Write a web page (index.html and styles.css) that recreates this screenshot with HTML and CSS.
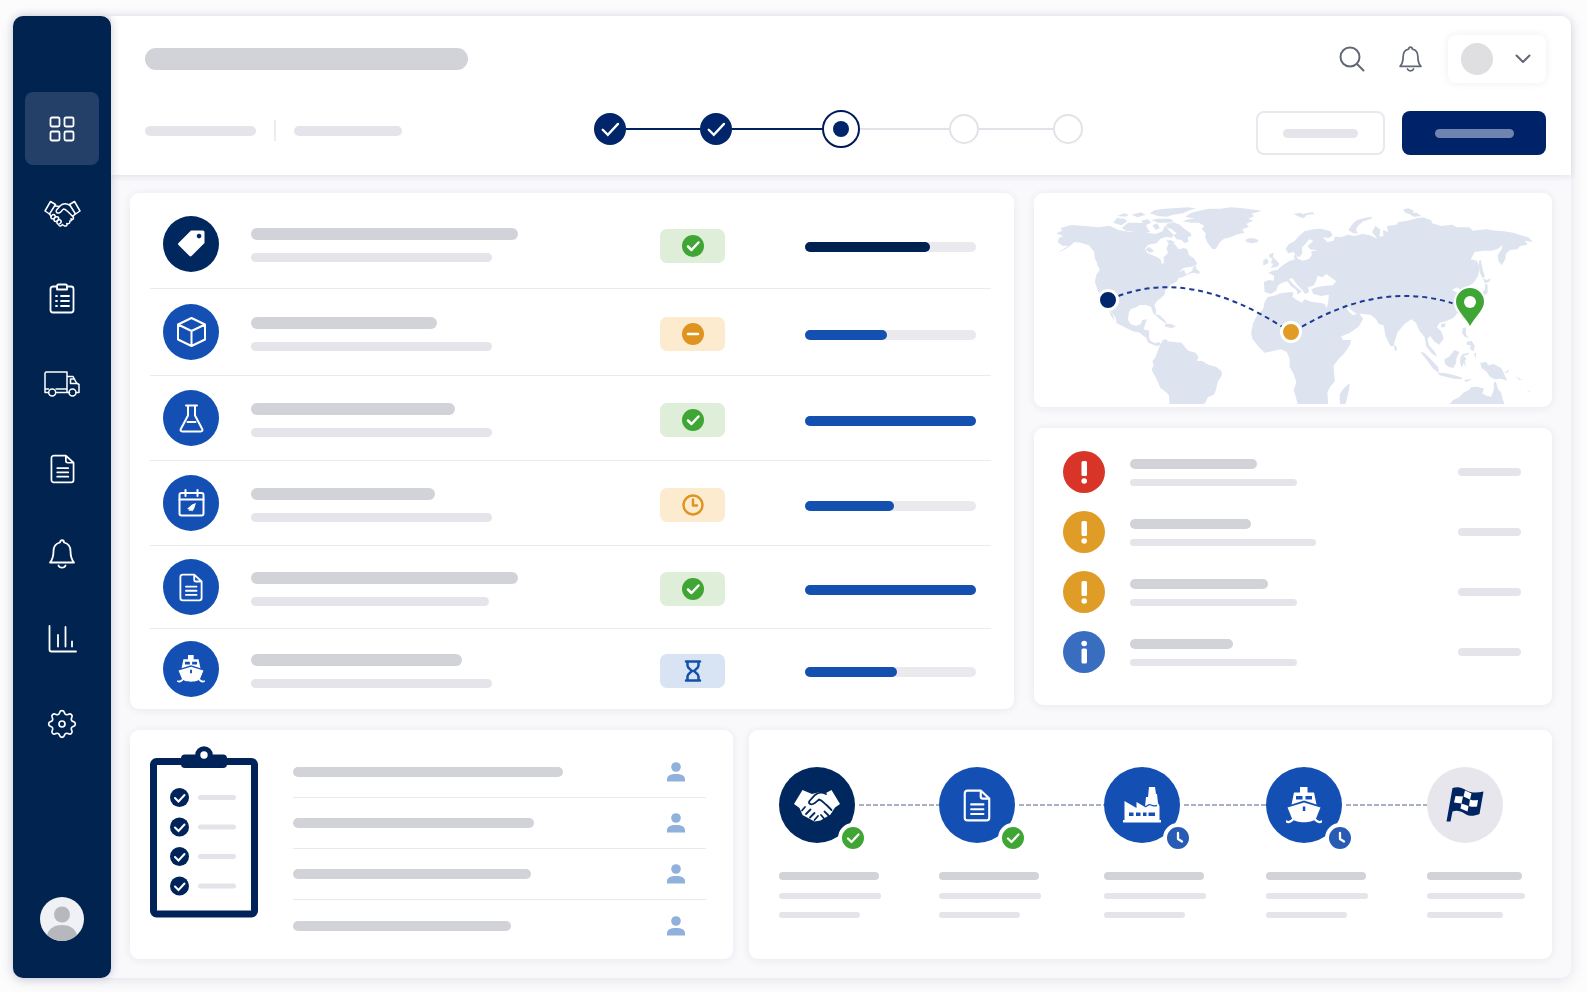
FILE: index.html
```html
<!DOCTYPE html>
<html lang="en">
<head>
    <meta charset="UTF-8">
    <meta name="viewport" content="width=device-width, initial-scale=1.0">
    <title>Sourcing Dashboard</title>
    <link rel="stylesheet" href="styles.css">
</head>
<body>

<!-- shared icons -->
<svg class="sprite" aria-hidden="true">
    <symbol id="check" viewBox="0 0 22 22"><path d="M6 11.5l3.5 3.5 7-7.500"/></symbol>
    <symbol id="clock" viewBox="0 0 22 22"><path d="M11 6v6l4 2.500"/></symbol>
    <symbol id="bell" viewBox="0 0 26 30">
        <path d="M11 3.500c0-3 4-3 4 0 4 1 6.500 4.500 6.500 8.500 0 5.500.5 8 3.500 11.500H1c3-3.500 3.500-6 3.500-11.500C4.500 8 7 4.500 11 3.500zM9.500 26.500c1 2.800 6 2.800 7 0"/>
    </symbol>
    <symbol id="doc" viewBox="0 0 26 31">
        <path d="M4 1.500h12.500L24.500 9v18a2.500 2.500 0 0 1-2.500 2.500H4A2.500 2.500 0 0 1 1.500 27V4A2.500 2.500 0 0 1 4 1.500zM16.500 1.500V7a2 2 0 0 0 2 2h6M7.500 14.500h11.500M7.500 19h11.500M7.500 23.500h11.500"/>
    </symbol>
    <symbol id="ship" viewBox="0 0 36 37">
        <path fill-rule="evenodd" d="M14 0h7.500v5.500H28l2.500 12L18 13.500l-12.500 4L8 5.500h6zM10 9v3.500h6.500V9zm9.500 0v3.500H26V9z"/>
        <path fill-rule="evenodd" d="M1.500 20.500L18 15.500l16.500 5-4.500 11c-3 5-21 5-24 0zM16.800 19.500v4.500h2.500v-4.500z"/>
        <path d="M.5 34.500c3 1.800 4.500-.5 6-1.500M35.500 34.500c-3 1.800-4.500-.5-6-1.500" fill="none" stroke="currentColor" stroke-width="2.200" stroke-linecap="round"/>
    </symbol>
    <symbol id="person" viewBox="0 0 18 20">
        <circle cx="9" cy="5" r="4.800"/><path d="M0 19.500v-2C0 13.500 3.500 12 9 12s9 1.500 9 5.500v2z"/>
    </symbol>
    <symbol id="alert" viewBox="0 0 42 42">
        <rect x="18.500" y="10" width="5.500" height="15" rx="1.500"/><circle cx="21.200" cy="30" r="2.800"/>
    </symbol>
</svg>

<div class="app">
    <nav class="sidebar" aria-label="Main">
        <a class="nav-item active" href="#" aria-label="Dashboard">
            <svg class="line-icon" width="26" height="26" viewBox="0 0 26 26">
                <rect x="1.500" y="1.500" width="9" height="9" rx="1.500"/><rect x="15.500" y="1.500" width="9" height="9" rx="1.500"/>
                <rect x="1.500" y="15.500" width="9" height="9" rx="1.500"/><rect x="15.500" y="15.500" width="9" height="9" rx="1.500"/>
            </svg>
        </a>
        <a class="nav-item" href="#" aria-label="Suppliers">
            <svg class="line-icon thin" width="37" height="28" viewBox="0 0 37 28">
                <path d="M6.500 1.500L1 11l4.500 3 6-9.500zM30.500 1.500L36 11l-4.500 3-6-9.500z"/>
                <path d="M11 6l4.500.5M26 5.500c-3-2.500-7-2.500-9.500 0l-4 4.500c-1 2 .5 3.500 2.500 3 2-.5 3-3 4.500-4 2 0 3 1.500 4.500 2.800l5 5c1.500 1.700-.5 3.700-2.300 2.200M31 14l-2.300 2.800M5.500 14l1.800 2.500"/>
                <path d="M7.300 18.200c-1.500-2 2-5 3.500-3s-2 5-3.500 3zM10.300 20.800c-1.500-2 2.500-5.500 4-3.500s-2.500 5.500-4 3.500zM13.300 23.500c-1.500-2 2-5 3.500-3s-2 5-3.500 3zM15 25.500c1 1 2.500.5 3.500-1M19 25l1.500 1c2 .5 3-1 2.300-2.500 2 .8 3.500-.5 3-2.500 1.500 0 2.200-1 1.900-2"/>
            </svg>
        </a>
        <a class="nav-item" href="#" aria-label="Orders">
            <svg class="line-icon" width="26" height="31" viewBox="0 0 26 31">
                <path d="M8 3.500H4A2.500 2.500 0 0 0 1.500 6v21A2.500 2.500 0 0 0 4 29.500h18a2.500 2.500 0 0 0 2.500-2.500V6A2.500 2.500 0 0 0 22 3.500h-4"/>
                <path d="M9.500 1.500h7A1.500 1.500 0 0 1 18 3v3.500H8V3a1.500 1.500 0 0 1 1.500-1.500zM12 13h8M12 18h8M12 23h8M7 13h1M7 18h1M7 23h1"/>
            </svg>
        </a>
        <a class="nav-item" href="#" aria-label="Shipments">
            <svg class="line-icon thin" width="36" height="26" viewBox="0 0 36 26">
                <path d="M4.500 21.500H1V2.500A1.500 1.500 0 0 1 2.500 1H23v20.500M23 5.500h6l3.500 6.500 2.500 1.500v8h-3M25.500 21.500H12M1 18h3.500M12 18h11M30.500 8h-4v4.500h6"/>
                <circle cx="8.200" cy="21.500" r="3.500"/><circle cx="28.500" cy="21.500" r="3.500"/>
            </svg>
        </a>
        <a class="nav-item" href="#" aria-label="Documents">
            <svg class="line-icon" width="25" height="30"><use href="#doc"/></svg>
        </a>
        <a class="nav-item" href="#" aria-label="Alerts">
            <svg class="line-icon" width="26" height="30"><use href="#bell"/></svg>
        </a>
        <a class="nav-item" href="#" aria-label="Reports">
            <svg class="line-icon" width="29" height="28" viewBox="0 0 29 28">
                <path d="M1.500 1v23.500a2 2 0 0 0 2 2H28M10 10v11.500M17.500 2v19.500M24 16.500v5"/>
            </svg>
        </a>
        <a class="nav-item" href="#" aria-label="Settings">
            <svg class="line-icon gear" width="30" height="30" viewBox="-1 -1 18 18">
                <path d="M9.405 1.050c-.413-1.400-2.397-1.400-2.810 0l-.1.340a1.464 1.464 0 0 1-2.105.872l-.31-.17c-1.283-.698-2.686.705-1.987 1.987l.169.311c.446.82.023 1.841-.872 2.105l-.34.1c-1.400.413-1.400 2.397 0 2.810l.34.1a1.464 1.464 0 0 1 .872 2.105l-.17.31c-.698 1.283.705 2.686 1.987 1.987l.311-.169a1.464 1.464 0 0 1 2.105.872l.1.340c.413 1.400 2.397 1.400 2.810 0l.1-.34a1.464 1.464 0 0 1 2.105-.872l.31.17c1.283.698 2.686-.705 1.987-1.987l-.169-.311a1.464 1.464 0 0 1 .872-2.105l.34-.1c1.400-.413 1.400-2.397 0-2.810l-.34-.1a1.464 1.464 0 0 1-.872-2.105l.17-.31c.698-1.283-.705-2.686-1.987-1.987l-.311.169a1.464 1.464 0 0 1-2.105-.872z"/>
                <circle cx="8" cy="8" r="1.800"/>
            </svg>
        </a>
        <a class="profile" href="#" aria-label="Profile">
            <svg width="44" height="44" viewBox="0 0 44 44">
                <circle cx="22" cy="22" r="22" fill="#f0f1f5"/>
                <circle cx="22" cy="17.500" r="8" fill="#b6b8bd"/>
                <path d="M7 38c2-7 8-10 15-10s13 3 15 10a22 22 0 0 1-30 0z" fill="#b6b8bd"/>
            </svg>
        </a>
    </nav>

    <div class="content">
        <header class="header">
            <div class="header-top">
                <span class="bar title"></span>
                <div class="tools">
                    <button class="icon-button" aria-label="Search">
                        <svg width="26" height="26" viewBox="0 0 26 26"><circle cx="11" cy="11" r="9.500"/><path d="M18 18l6.500 6.500"/></svg>
                    </button>
                    <button class="icon-button" aria-label="Notifications">
                        <svg width="23" height="26"><use href="#bell"/></svg>
                    </button>
                    <button class="user-menu" aria-label="Account menu">
                        <span class="user-photo"></span>
                        <svg width="16" height="10" viewBox="0 0 16 10"><path d="M1.500 1.500L8 8l6.500-6.500"/></svg>
                    </button>
                </div>
            </div>
            <div class="header-bottom">
                <div class="meta">
                    <span class="bar light h10 w111"></span>
                    <span class="meta-divider"></span>
                    <span class="bar light h10 w108"></span>
                </div>
                <ol class="stepper">
                    <li class="step done"><svg width="32" height="32"><use href="#check"/></svg></li>
                    <li class="step-line done"></li>
                    <li class="step done"><svg width="32" height="32"><use href="#check"/></svg></li>
                    <li class="step-line wide done"></li>
                    <li class="step current"></li>
                    <li class="step-line wide"></li>
                    <li class="step"></li>
                    <li class="step-line"></li>
                    <li class="step"></li>
                </ol>
                <div class="actions">
                    <button class="button" aria-label="Save"><span class="bar light h9 w75"></span></button>
                    <button class="button primary" aria-label="Continue"><span class="bar h9 w79"></span></button>
                </div>
            </div>
        </header>

        <main class="main">
            <div class="row top-row">
                <section class="card products">
                    <div class="product">
                        <span class="circle dark">
                            <svg width="27" height="27" viewBox="0 0 27 27" fill="#fff"><path fill-rule="evenodd" d="M13 .5h12a1.500 1.500 0 0 1 1.500 1.500v11L13.500 26a1.500 1.500 0 0 1-2 0L.5 15a1.500 1.500 0 0 1 0-2zM21 3.800a2.300 2.300 0 1 0 .1 0z"/></svg>
                        </span>
                        <div class="lines"><span class="bar h12 w267"></span><span class="bar light h9 w241"></span></div>
                        <span class="badge green"><svg class="mark" width="22" height="22"><use href="#check"/></svg></span>
                        <div class="progress" role="progressbar" aria-valuenow="73"><div class="fill dark" style="width: 73%"></div></div>
                    </div>
                    <div class="product">
                        <span class="circle">
                            <svg class="line-icon" width="29" height="30" viewBox="0 0 29 30"><path d="M14.500 1L28 7.500v15L14.500 29 1 22.500v-15zM1 7.500l13.500 6.500L28 7.500M14.500 14v15"/></svg>
                        </span>
                        <div class="lines"><span class="bar h12 w186"></span><span class="bar light h9 w241"></span></div>
                        <span class="badge orange"><svg class="mark" width="22" height="22" viewBox="0 0 22 22"><path d="M6 11h10"/></svg></span>
                        <div class="progress" role="progressbar" aria-valuenow="48"><div class="fill" style="width: 48%"></div></div>
                    </div>
                    <div class="product">
                        <span class="circle">
                            <svg class="line-icon" width="25" height="29" viewBox="0 0 25 29"><path d="M7 1.500h11M9 1.500v10L1.800 25c-.7 1.500 0 2.500 1.500 2.500h18.400c1.500 0 2.200-1 1.500-2.500L16 11.500v-10M8.500 18h8"/></svg>
                        </span>
                        <div class="lines"><span class="bar h12 w204"></span><span class="bar light h9 w241"></span></div>
                        <span class="badge green"><svg class="mark" width="22" height="22"><use href="#check"/></svg></span>
                        <div class="progress" role="progressbar" aria-valuenow="100"><div class="fill" style="width: 100%"></div></div>
                    </div>
                    <div class="product">
                        <span class="circle">
                            <svg class="line-icon" width="27" height="28" viewBox="0 0 27 28"><rect x="1.500" y="4" width="24" height="22.500" rx="2"/><path d="M1.500 10.500h24M7.500 1v6M19.500 1v6"/><path d="M18 14l-4 1.500-5 4.500 2.500.5-1 1.500 3-.5.500 1 2-2.500z" fill="#fff" stroke="none"/></svg>
                        </span>
                        <div class="lines"><span class="bar h12 w184"></span><span class="bar light h9 w241"></span></div>
                        <span class="badge orange open"><svg class="mark" width="22" height="22" viewBox="0 0 22 22"><circle cx="11" cy="11" r="9.500"/><path d="M11 5.500v6h4"/></svg></span>
                        <div class="progress" role="progressbar" aria-valuenow="52"><div class="fill" style="width: 52%"></div></div>
                    </div>
                    <div class="product">
                        <span class="circle"><svg class="line-icon" width="24" height="29"><use href="#doc"/></svg></span>
                        <div class="lines"><span class="bar h12 w267"></span><span class="bar light h9 w238"></span></div>
                        <span class="badge green"><svg class="mark" width="22" height="22"><use href="#check"/></svg></span>
                        <div class="progress" role="progressbar" aria-valuenow="100"><div class="fill" style="width: 100%"></div></div>
                    </div>
                    <div class="product">
                        <span class="circle"><svg class="solid-icon" width="28" height="28"><use href="#ship"/></svg></span>
                        <div class="lines"><span class="bar h12 w211"></span><span class="bar light h9 w241"></span></div>
                        <span class="badge blue"><svg class="mark" width="22" height="22" viewBox="0 0 22 22"><path d="M4 1.500h14M4 20.500h14M5.500 2v3.500c0 3 4 4 4 5.500s-4 2.500-4 5.500V20M16.500 2v3.500c0 3-4 4-4 5.500s4 2.500 4 5.500V20M10 11h2"/></svg></span>
                        <div class="progress" role="progressbar" aria-valuenow="54"><div class="fill" style="width: 54%"></div></div>
                    </div>
                </section>

                <div class="side">
                    <section class="card map">
                        <svg viewBox="0 0 518 214" role="img" aria-label="Shipping route">
                            <g class="land" transform="translate(-4 -3) scale(.338 .3333)">
                                <!-- north america -->
                                <path d="M78 130L96 122 90 114 122 105 165 108 202 112 235 107 262 120 300 127 330 124 350 129 372 132 392 124 400 106 412 122 424 134 420 144 404 140 386 146 374 160 350 164 340 176 348 190 374 200 386 208 390 222 397 218 395 202 408 190 404 174 412 158 430 164 440 178 455 174 465 178 470 194 486 206 495 222 480 230 455 233 440 246 456 240 462 254 478 244 490 234 502 246 476 250 450 262 440 264 434 275 415 284 412 292 400 300 398 315 376 333 368 344 373 360 372 376 364 368 358 350 344 345 324 345 314 352 298 357 292 370 290 390 298 403 314 408 328 402 332 390 346 388 340 405 336 418 353 422 352 440 356 452 370 460 382 456 388 464 374 468 350 458 344 444 324 428 304 424 280 412 256 400 254 384 240 365 232 348 214 330 200 300 192 276 196 255 206 240 202 224 192 206 190 185 174 166 150 158 132 156 118 168 104 178 78 190 100 176 114 167 96 167 82 156 86 144 98 138z"/>
                                <path d="M232 358L244 372 252 392 240 378zM198 218L212 228 212 238 200 228z"/>
                                <!-- arctic islands and greenland -->
                                <path d="M246 98L258 84 280 86 288 94 270 106zM276 110L290 98 320 98 340 100 348 116 356 126 336 130 310 126 284 122 272 114zM258 78L278 70 292 74 282 80zM300 74L328 67 342 74 318 82zM328 92L350 88 358 98 342 106zM354 70L370 60 400 56 436 54 466 52 492 55 468 62 452 70 424 74 404 80 378 78zM358 90L380 86 414 86 426 94 410 98 380 98zM362 106L376 100 384 114 372 120zM404 102L424 97 444 104 456 116 474 128 478 138 466 142 470 154 458 160 448 150 434 148 424 136 434 130 420 118 404 112zM402 152L416 150 430 158 416 164zM342 178L352 170 368 184 354 188z"/>
                                <path d="M452 94L470 88 488 86 460 80 478 68 500 62 530 56 564 56 594 52 624 54 652 58 686 62 666 68 654 72 664 78 646 86 660 92 640 102 648 110 628 118 634 128 610 134 594 142 574 146 562 156 550 176 540 178 526 160 518 142 520 130 508 116 516 108 500 98 476 98z"/>
                                <path d="M482 232L492 226 490 238 504 248 496 252 480 244zM368 372L384 376 400 392 406 402 392 394 378 382zM400 402L418 402 432 410 418 414 400 410z"/>
                                <!-- south america -->
                                <path d="M385 466L393 449 402 448 408 454 426 456 448 458 458 470 468 482 490 488 498 500 494 514 508 512 528 524 550 530 566 542 568 556 556 574 550 600 544 614 526 622 518 640 514 642 413 642 411 616 402 606 386 594 374 566 360 540 366 524 362 514 372 500 378 482z"/>
                                <!-- atlantic islands -->
                                <path d="M636 150L648 145 662 145 676 150 674 157 656 160 642 156zM708 192L722 188 718 200 728 210 738 222 732 230 712 233 720 222 712 218 718 208 708 200zM690 212L698 205 706 212 702 222 690 226zM780 72L800 68 806 72 836 66 842 72 820 74 810 84 796 80zM942 120L956 100 968 90 990 84 1012 80 1010 86 986 94 972 106 964 118 970 132 954 128zM1104 58L1120 55 1136 62 1132 68 1144 68 1158 78 1136 80 1122 72 1110 68z"/>
                                <!-- europe and asia -->
                                <path d="M692 276L706 270 722 272 722 258 706 248 718 242 732 240 742 230 754 222 766 214 784 208 780 198 786 192 792 206 808 212 826 206 834 194 832 184 852 181 828 178 822 168 838 152 826 148 816 160 804 174 806 190 796 202 786 194 780 186 764 190 756 176 766 162 782 154 796 138 812 124 838 118 862 116 888 124 896 136 884 144 866 142 880 156 898 152 902 140 920 142 940 134 960 138 984 132 1006 136 1028 146 1012 126 1022 108 1036 118 1034 140 1046 138 1044 120 1060 126 1056 108 1084 104 1090 96 1118 92 1146 84 1162 82 1186 90 1190 100 1216 108 1250 104 1262 112 1300 112 1310 122 1350 118 1378 122 1402 124 1430 128 1452 136 1474 142 1488 156 1464 152 1472 164 1450 168 1442 178 1420 180 1408 192 1406 208 1396 226 1386 214 1384 196 1396 176 1398 166 1384 176 1366 182 1340 182 1316 186 1304 208 1322 212 1330 230 1326 258 1312 278 1298 288 1304 304 1310 322 1298 322 1290 304 1276 302 1264 292 1248 300 1260 306 1272 306 1262 322 1272 342 1268 366 1252 384 1230 394 1212 398 1204 412 1218 426 1224 446 1210 464 1196 454 1184 438 1176 446 1180 466 1198 486 1204 500 1188 490 1172 468 1168 442 1152 422 1142 398 1128 388 1108 402 1088 426 1080 450 1076 468 1066 468 1052 438 1046 406 1032 402 1024 388 1008 374 984 372 960 368 944 354 934 348 944 366 956 376 972 368 986 386 972 410 944 430 918 440 904 418 888 388 876 358 882 340 884 314 862 318 838 312 832 298 848 292 868 288 896 286 906 274 890 262 876 252 866 262 850 258 846 274 840 286 822 292 826 306 814 312 804 298 792 286 776 264 766 268 780 284 796 298 804 304 792 314 788 300 772 288 762 274 746 278 734 286 728 302 712 312 694 306z"/>
                                <!-- africa, madagascar -->
                                <path d="M704 320L720 318 742 310 772 306 780 308 776 320 786 328 804 338 812 328 834 336 856 338 872 342 884 370 896 396 912 424 926 450 950 450 946 466 930 490 912 508 898 528 900 552 902 574 888 590 880 606 882 642 792 642 786 620 780 600 788 576 780 552 768 530 768 506 760 486 742 478 716 484 694 488 676 470 658 446 654 430 660 400 672 376 690 356 694 336zM917 642L916 614 924 600 938 586 946 580 944 598 934 642z"/>
                                <!-- pacific islands -->
                                <path d="M1328 212L1334 210 1338 234 1346 258 1340 266 1330 246zM1340 266L1352 270 1364 264 1358 276 1346 280zM1346 282L1354 284 1354 308 1342 320 1322 328 1312 334 1314 326 1334 314 1346 298zM1278 376L1284 376 1280 392zM1216 402L1230 400 1226 412 1216 412zM1280 414L1290 412 1290 434 1300 444 1286 440 1278 428zM1292 456L1306 452 1316 468 1312 484 1302 478 1304 466 1292 464zM1154 484L1168 490 1190 512 1208 532 1210 548 1194 538 1178 516zM1206 548L1230 550 1250 554 1276 562 1280 568 1254 566 1212 556zM1226 508L1240 500 1256 480 1270 486 1262 504 1260 520 1252 534 1238 530 1228 522zM1274 502L1280 492 1300 488 1296 494 1282 498 1292 506 1286 512 1290 530 1282 520 1278 534 1272 518zM1284 570L1310 566 1290 576zM1314 490L1320 488 1318 506zM1332 518L1350 516 1356 526 1372 522 1394 534 1402 550 1412 572 1392 566 1376 568 1360 560 1352 546 1336 534zM1402 548L1420 538 1412 548zM1434 558L1456 570 1448 570zM1470 598L1482 606 1474 604zM1076 464L1084 470 1086 480 1080 484z"/>
                                <path d="M1242 642L1252 630 1270 622 1282 608 1298 600 1306 592 1322 590 1344 596 1338 610 1352 618 1364 620 1372 600 1372 580 1378 574 1384 596 1394 608 1398 626 1404 642z"/>
                            </g>
                            <g class="route">
                                <path d="M84.500 103C131 85.300 185 93.700 248 133.700M268 133.700C317 105.300 368 94.300 418.500 110.300"/>
                            </g>
                            <circle cx="74" cy="107" r="9.500" fill="#00266b" stroke="#fff" stroke-width="3"/>
                            <circle cx="257" cy="139" r="9.500" fill="#e09c24" stroke="#fff" stroke-width="3"/>
                            <circle cx="436" cy="109" r="16" fill="#fff"/>
                            <path d="M436 133c-4-8-14-16-14-24a14 14 0 0 1 28 0c0 8-10 16-14 24z" fill="#3fa535"/>
                            <circle cx="436" cy="109" r="6" fill="#fff"/>
                        </svg>
                    </section>

                    <section class="card alerts">
                        <div class="alert">
                            <svg class="alert-icon red" width="42" height="42"><use href="#alert"/></svg>
                            <div class="lines"><span class="bar h10 w127"></span><span class="bar light h7 w167"></span></div>
                            <span class="bar light h8 w63"></span>
                        </div>
                        <div class="alert">
                            <svg class="alert-icon orange" width="42" height="42"><use href="#alert"/></svg>
                            <div class="lines"><span class="bar h10 w121"></span><span class="bar light h7 w186"></span></div>
                            <span class="bar light h8 w63"></span>
                        </div>
                        <div class="alert">
                            <svg class="alert-icon orange" width="42" height="42"><use href="#alert"/></svg>
                            <div class="lines"><span class="bar h10 w138"></span><span class="bar light h7 w167"></span></div>
                            <span class="bar light h8 w63"></span>
                        </div>
                        <div class="alert">
                            <svg class="alert-icon blue" width="42" height="42" viewBox="0 0 42 42"><circle cx="21.200" cy="12.500" r="2.800"/><rect x="18.500" y="17.500" width="5.500" height="15" rx="1.500"/></svg>
                            <div class="lines"><span class="bar h10 w103"></span><span class="bar light h7 w167"></span></div>
                            <span class="bar light h8 w63"></span>
                        </div>
                    </section>
                </div>
            </div>

            <div class="row bottom-row">
                <section class="card checklist">
                    <svg class="clipboard" width="108" height="172" viewBox="0 0 108 172">
                        <rect x="3.500" y="15.500" width="101" height="152.500" rx="3" fill="#fff" stroke="#00235a" stroke-width="7"/>
                        <rect x="31" y="8.500" width="46" height="13.500" rx="4" fill="#00235a"/>
                        <circle cx="54" cy="9" r="8.800" fill="#00235a"/><circle cx="54" cy="9" r="3.700" fill="#fff"/>
                        <g fill="#00235a"><circle cx="29.500" cy="51.500" r="9.500"/><circle cx="29.500" cy="81" r="9.500"/><circle cx="29.500" cy="110.500" r="9.500"/><circle cx="29.500" cy="140" r="9.500"/></g>
                        <path d="M25 52l3.500 3.500 6-6.500M25 81.500l3.500 3.500 6-6.500M25 111l3.500 3.500 6-6.500M25 140.500l3.500 3.500 6-6.500" fill="none" stroke="#fff" stroke-width="2" stroke-linecap="round"/>
                        <path d="M50.500 51.500h33M50.500 81h33M50.500 110.500h33M50.500 140h33" stroke="#e3e3e9" stroke-width="5" stroke-linecap="round"/>
                    </svg>
                    <ul class="tasks">
                        <li><span class="bar h10 w270"></span><svg class="person" width="18" height="20"><use href="#person"/></svg></li>
                        <li><span class="bar h10 w241"></span><svg class="person" width="18" height="20"><use href="#person"/></svg></li>
                        <li><span class="bar h10 w238"></span><svg class="person" width="18" height="20"><use href="#person"/></svg></li>
                        <li><span class="bar h10 w218"></span><svg class="person" width="18" height="20"><use href="#person"/></svg></li>
                    </ul>
                </section>

                <section class="card timeline">
                    <div class="stage">
                        <div class="stage-head">
                            <span class="circle big dark">
                                <svg width="46" height="33" viewBox="0 0 46 33">
                                    <path fill="#fff" d="M8.500 1L0 15l5.500 4 3 7 12 6.500 6-1 10-6 4.500-7 5-3.500L37.500 1l-5.500 3-8-.5-6 1.500z"/>
                                    <path d="M32 5c-4-2-8-1.500-11 1l-5.500 6c-1.500 2.500 1 4 3.500 3s4-3 6-4.500c3 .5 5 3.500 7.500 5.500l5 5M8 21.500l3-3.500M12 25l4.500-4.500M16 28.500l4.500-4.500M20.500 31l3.500-4M27 26l3.500 4M30.500 22.500l4 4" fill="none" stroke="#00285f" stroke-width="1.800" stroke-linecap="round"/>
                                </svg>
                                <svg class="state green" width="30" height="30"><use href="#check"/></svg>
                            </span>
                            <span class="dashes"></span>
                        </div>
                        <span class="bar h8 w100"></span><span class="bar light h6 w102"></span><span class="bar light h6 w81"></span>
                    </div>
                    <div class="stage">
                        <div class="stage-head">
                            <span class="circle big">
                                <svg class="line-icon" width="28" height="33"><use href="#doc"/></svg>
                                <svg class="state green" width="30" height="30"><use href="#check"/></svg>
                            </span>
                            <span class="dashes"></span>
                        </div>
                        <span class="bar h8 w100"></span><span class="bar light h6 w102"></span><span class="bar light h6 w81"></span>
                    </div>
                    <div class="stage">
                        <div class="stage-head">
                            <span class="circle big">
                                <svg width="38" height="36" viewBox="0 0 38 36" fill="#fff"><path fill-rule="evenodd" d="M1.500 33V14l12 7v-6l8.500 5 1-10h2l1-10h6l1 7h1l1 9 1.500 3v14H38v2.500H0V33zM6 25.500V29h4.500v-3.500zm7 0V29h4.500v-3.500zm7 0V29h3.500v-3.500zm5.500 0V29H32v-3.500z"/><path d="M22 19.500c2 .5 3-3 6-1.500s4 1 6 .5" fill="none" stroke="#1450b4" stroke-width="1.300"/></svg>
                                <svg class="state blue" width="30" height="30"><use href="#clock"/></svg>
                            </span>
                            <span class="dashes"></span>
                        </div>
                        <span class="bar h8 w100"></span><span class="bar light h6 w102"></span><span class="bar light h6 w81"></span>
                    </div>
                    <div class="stage">
                        <div class="stage-head">
                            <span class="circle big">
                                <svg class="solid-icon" width="36" height="37"><use href="#ship"/></svg>
                                <svg class="state blue" width="30" height="30"><use href="#clock"/></svg>
                            </span>
                            <span class="dashes"></span>
                        </div>
                        <span class="bar h8 w100"></span><span class="bar light h6 w102"></span><span class="bar light h6 w81"></span>
                    </div>
                    <div class="stage">
                        <div class="stage-head">
                            <span class="circle big pale">
                                <svg width="38" height="36" viewBox="0 0 38 36">
                                    <path d="M6.500 1c6-2 10 0 14 2.500C25 6 31 6 37.500 4.500L33.500 27c-6 2.500-11 2.500-15-.5-4-2.500-8-3.500-12-2L4.500 34.500H.5z" fill="#002560"/>
                                    <path d="M19 3.500l6.500 3-1.500 6-6.500-3zM9.500 9l7.500.5-1.500 7-7.500-1zM24 12.500c3 1 5 1 8 .5l-1 6.500c-3 .5-5.500.5-8-.5zM15.500 16.500l7 2.500-1 5.500-7-3z" fill="#fff"/>
                                </svg>
                            </span>
                        </div>
                        <span class="bar h8 w95"></span><span class="bar light h6 w98"></span><span class="bar light h6 w76"></span>
                    </div>
                </section>
            </div>
        </main>
    </div>
</div>

</body>
</html>
```
FILE: styles.css
```css
* {
    box-sizing: border-box;
}
body {
    margin: 0;
    padding: 16px 15px 14px 13px;
    background-color: #fcfcfd;
    font-family: Inter, sans-serif;
}
button {
    padding: 0;
    border: none;
    background: none;
    cursor: pointer;
}
ol, ul {
    list-style: none;
    margin: 0;
    padding: 0;
}
.sprite {
    display: none;
}
.app {
    display: flex;
    min-height: calc(100vh - 30px);
    border-radius: 10px;
    background-color: #f9f9fc;
    box-shadow: 0 2px 14px rgba(30, 40, 80, 0.12);
}

/* sidebar */
.sidebar {
    display: flex;
    flex-direction: column;
    align-items: center;
    gap: 12px;
    width: 98px;
    padding: 76px 12px 37px;
    border-radius: 10px;
    background-color: #00234f;
    box-shadow: 1px 0 8px rgba(30, 40, 80, 0.2);
    z-index: 1;
}
.nav-item {
    display: flex;
    align-items: center;
    justify-content: center;
    width: 100%;
    height: 73px;
    border-radius: 8px;
}
.nav-item.active {
    background-color: #243f68;
}
.profile {
    height: 44px;
    margin-top: auto;
}
.line-icon {
    fill: none;
    stroke: #fff;
    stroke-width: 1.8;
    stroke-linecap: round;
    stroke-linejoin: round;
}
.circle .line-icon {
    stroke-width: 2;
}
.line-icon.thin {
    stroke-width: 1.5;
}
.line-icon.gear {
    stroke-width: 1;
}
.solid-icon {
    color: #fff;
    fill: #fff;
}

/* placeholder bars */
.bar {
    display: block;
    max-width: 100%;
    border-radius: 12px;
    background-color: #d2d3d9;
}
.bar.light {
    background-color: #e4e4ea;
}
.h6 { height: 6px; }
.h7 { height: 7px; }
.h8 { height: 8px; }
.h9 { height: 9px; }
.h10 { height: 10px; }
.h12 { height: 12px; }
.w63 { width: 63px; }
.w75 { width: 75px; }
.w76 { width: 76px; }
.w79 { width: 79px; }
.w81 { width: 81px; }
.w95 { width: 95px; }
.w98 { width: 98px; }
.w100 { width: 100px; }
.w102 { width: 102px; }
.w103 { width: 103px; }
.w108 { width: 108px; }
.w111 { width: 111px; }
.w121 { width: 121px; }
.w127 { width: 127px; }
.w138 { width: 138px; }
.w167 { width: 167px; }
.w184 { width: 184px; }
.w186 { width: 186px; }
.w204 { width: 204px; }
.w211 { width: 211px; }
.w218 { width: 218px; }
.w238 { width: 238px; }
.w241 { width: 241px; }
.w267 { width: 267px; }
.w270 { width: 270px; }

/* header */
.content {
    flex: 1;
    display: flex;
    flex-direction: column;
    min-width: 0;
}
.header {
    padding: 19px 25px 20px 34px;
    border-top-right-radius: 10px;
    background-color: #fff;
    box-shadow: 0 1px 7px rgba(30, 40, 80, 0.12);
}
.header-top {
    display: flex;
    align-items: center;
    justify-content: space-between;
}
.title {
    width: 323px;
    height: 22px;
}
.tools {
    display: flex;
    align-items: center;
    gap: 26px;
}
.tools svg {
    display: block;
    fill: none;
    stroke: #626775;
    stroke-width: 2;
    stroke-linecap: round;
    stroke-linejoin: round;
}
.icon-button {
    display: flex;
    justify-content: center;
    width: 32px;
}
.user-menu {
    display: flex;
    align-items: center;
    justify-content: space-between;
    width: 98px;
    height: 48px;
    padding: 0 15px 0 13px;
    margin-left: -4px;
    border-radius: 8px;
    background-color: #fff;
    box-shadow: 0 0 8px rgba(30, 40, 80, 0.08);
}
.user-photo {
    width: 32px;
    height: 32px;
    border-radius: 50%;
    background-color: #dfdfe1;
}
.header-bottom {
    display: grid;
    grid-template-columns: 449fr 489fr 463fr;
    align-items: start;
    margin-top: 28px;
}
.meta {
    display: flex;
    align-items: center;
    gap: 18px;
    height: 39px;
}
.meta-divider {
    width: 2px;
    height: 21px;
    background-color: #ededf1;
}
.stepper {
    display: flex;
    align-items: center;
    height: 38px;
    margin-top: -1px;
}
.step {
    display: flex;
    align-items: center;
    justify-content: center;
    width: 30px;
    height: 30px;
    border: 2px solid #e2e3e8;
    border-radius: 50%;
    background-color: #fff;
}
.step.done {
    width: 32px;
    height: 32px;
    border: none;
    background-color: #00256a;
}
.step.done svg {
    fill: none;
    stroke: #fff;
    stroke-width: 1.6;
    stroke-linecap: round;
}
.step.current {
    width: 38px;
    height: 38px;
    border-color: #00195c;
}
.step.current::before {
    content: "";
    width: 16px;
    height: 16px;
    border-radius: 50%;
    background-color: #00256a;
}
.step-line {
    flex: 5;
    height: 2px;
    background-color: #e2e3e8;
}
.step-line.wide {
    flex: 6;
}
.step-line.done {
    background-color: #00235f;
}
.actions {
    display: flex;
    justify-content: flex-end;
    gap: 17px;
}
.button {
    display: flex;
    align-items: center;
    justify-content: center;
    width: 129px;
    height: 44px;
    border: 2px solid #e8e9ee;
    border-radius: 8px;
    background-color: #fff;
}
.button.primary {
    width: 144px;
    border: none;
    background-color: #002268;
}
.button.primary .bar {
    background-color: #6f84b1;
}

/* cards */
.main {
    flex: 1;
    display: grid;
    grid-template-rows: 516fr 229fr;
    gap: 21px;
    padding: 18px 19px 19px;
}
.row {
    display: grid;
}
.top-row {
    grid-template-columns: 884fr 518fr;
    gap: 20px;
}
.bottom-row {
    grid-template-columns: 603fr 803fr;
    gap: 16px;
}
.card {
    border-radius: 9px;
    background-color: #fff;
    box-shadow: 0 1px 8px rgba(30, 40, 80, 0.08);
}
.circle {
    display: flex;
    align-items: center;
    justify-content: center;
    width: 56px;
    height: 56px;
    border-radius: 50%;
    background-color: #1450b4;
}
.circle.dark {
    background-color: #00285f;
}

/* products */
.products {
    display: grid;
    grid-template-rows: 90fr 87fr 85fr 85fr 83fr 80fr;
    padding: 6px 23px 0 20px;
}
.product {
    display: grid;
    grid-template-columns: 88px 409fr 145fr 171fr;
    align-items: center;
    padding: 0 15px 0 13px;
    border-bottom: 1px solid #ebebef;
}
.product:last-child {
    border-bottom: none;
}
.product .lines {
    display: grid;
    gap: 13px;
    padding-top: 3px;
}
.badge {
    display: flex;
    align-items: center;
    justify-content: center;
    width: 65px;
    height: 34px;
    margin-top: 4px;
    border-radius: 7px;
}
.badge.green {
    background-color: #deeed8;
}
.badge.orange {
    background-color: #fdebd0;
}
.badge.blue {
    background-color: #d8e3f4;
}
.mark {
    border-radius: 50%;
    fill: none;
    stroke: #fff;
    stroke-width: 2.5;
    stroke-linecap: round;
    stroke-linejoin: round;
}
.green .mark {
    background-color: #3fa535;
}
.orange .mark {
    background-color: #df9420;
}
.open .mark {
    background-color: transparent;
    stroke: #df9420;
}
.blue .mark {
    border-radius: 0;
    stroke: #1450a8;
}
.progress {
    height: 10px;
    margin-top: 6px;
    border-radius: 5px;
    background-color: #e9e9ee;
}
.fill {
    height: 100%;
    border-radius: 5px;
    background-color: #1450b0;
}
.fill.dark {
    background-color: #002252;
}

/* map and alerts */
.side {
    display: flex;
    flex-direction: column;
    gap: 21px;
    padding-bottom: 4px;
}
.map svg {
    display: block;
    width: 100%;
}
.land {
    fill: #dde3ef;
}
.route {
    fill: none;
    stroke: #1d3a94;
    stroke-width: 2;
    stroke-dasharray: 5 4;
}
.alerts {
    flex: 1;
    display: flex;
    flex-direction: column;
    gap: 18px;
    padding: 23px 31px 22px 29px;
}
.alert {
    display: flex;
    align-items: center;
}
.alert .lines {
    display: grid;
    flex: 1;
    gap: 10px;
    padding-left: 25px;
}
.alert-icon {
    border-radius: 50%;
    fill: #fff;
}
.alert-icon.red {
    background-color: #d93428;
}
.alert-icon.orange {
    background-color: #df9c27;
}
.alert-icon.blue {
    background-color: #386dc0;
}

/* checklist */
.checklist {
    display: flex;
    align-items: flex-start;
    gap: 35px;
    padding: 16px 27px 7px 20px;
}
.clipboard {
    flex-shrink: 0;
}
.tasks {
    flex: 1;
    min-width: 0;
    padding-top: 1px;
}
.tasks li {
    display: flex;
    align-items: center;
    justify-content: space-between;
    height: 51px;
    padding-right: 21px;
    border-bottom: 1px solid #e9e9ee;
}
.tasks li:last-child {
    border-bottom: none;
}
.person {
    fill: #8fb1dc;
}

/* timeline */
.timeline {
    display: grid;
    grid-template-columns: 160fr 164fr 161fr 161fr 100px;
    align-items: start;
    padding: 37px 25px 20px 30px;
}
.stage-head {
    display: flex;
    align-items: center;
    margin-bottom: 29px;
}
.circle.big {
    position: relative;
    flex-shrink: 0;
    width: 76px;
    height: 76px;
}
.circle.pale {
    background-color: #e6e6ec;
}
.circle .state {
    position: absolute;
    right: -13px;
    bottom: -10px;
    border: 4px solid #fff;
    border-radius: 50%;
    fill: none;
    stroke: #fff;
    stroke-width: 2.3;
    stroke-linecap: round;
    stroke-linejoin: round;
}
.state.green {
    background-color: #3fa535;
}
.state.blue {
    background-color: #285cb4;
}
.dashes {
    flex: 1;
    height: 2px;
    margin-left: 4px;
    background: repeating-linear-gradient(90deg, #a9b0c2 0 5px, transparent 5px 7px);
}
.stage .light {
    margin-top: 13px;
}
```
